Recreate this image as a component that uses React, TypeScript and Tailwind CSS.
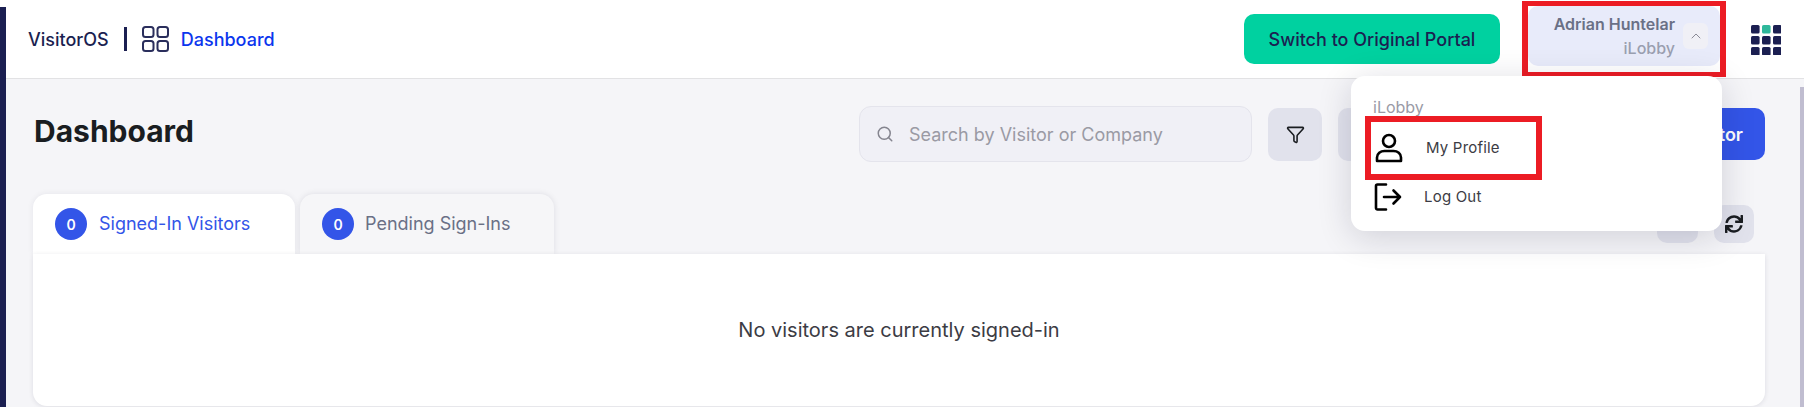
import React from "react";
import { Funnel, Search, ChevronUp } from "lucide-react";
import { FaSync } from "react-icons/fa";

function FourSquares() {
  return (
    <svg width="27" height="26" viewBox="0 0 27 26" fill="none" stroke="#2a2e5c" strokeWidth="2">
      <rect x="1" y="1" width="10.5" height="10" rx="2.5" />
      <rect x="15.5" y="1" width="10.5" height="10" rx="2.5" />
      <rect x="1" y="15" width="10.5" height="10" rx="2.5" />
      <rect x="15.5" y="15" width="10.5" height="10" rx="2.5" />
    </svg>
  );
}

function AppGrid() {
  const cells = [0, 1, 2, 3, 4, 5, 6, 7, 8];
  return (
    <svg width="30" height="30" viewBox="0 0 30 30">
      {cells.map((c) => (
        <rect
          key={c}
          x={(c % 3) * 11}
          y={Math.floor(c / 3) * 11 - 0}
          width="8.6"
          height="8.6"
          rx="1.6"
          fill={c === 1 ? "#2fb89b" : "#1b1f51"}
        />
      ))}
    </svg>
  );
}

function UserIcon() {
  return (
    <svg width="28" height="30" viewBox="0 0 28 30" fill="none" stroke="#000" strokeWidth="2.6">
      <circle cx="14" cy="8" r="6" />
      <path d="M2 24.5C2 20.5 5.5 18 9.5 18h9c4 0 7.5 2.5 7.5 6.5V28H2z" strokeLinejoin="round" />
    </svg>
  );
}

function LogoutIcon() {
  return (
    <svg width="28" height="28" viewBox="0 0 28 28" fill="none" stroke="#000" strokeWidth="2.6" strokeLinecap="round" strokeLinejoin="round">
      <path d="M12 1.5H3.5A1.5 1.5 0 0 0 2 3v22a1.5 1.5 0 0 0 1.5 1.5H12" />
      <path d="M10 14h16M19.5 7.5 26 14l-6.500 6.500" />
    </svg>
  );
}

export default function App() {
  return (
    <div className="flex h-[407px] w-[1804px] overflow-hidden bg-white font-['Inter',sans-serif]">
      <div className="mt-[7px] w-[6px] shrink-0 bg-[#1b1f51]" />
      <div className="flex min-w-0 flex-1 flex-col">
        <header className="relative z-10 flex h-[79px] shrink-0 items-center border-b border-[#e2e2e4] bg-white pl-[22px] pr-[23px]">
          <span className="text-[18px] font-medium text-[#1b1f51]">VisitorOS</span>
          <span className="ml-[15px] h-[24px] w-[3px] bg-[#1b1f51]" />
          <span className="ml-[15px] flex">
            <FourSquares />
          </span>
          <span className="ml-[12px] text-[18px] font-medium text-[#0b36ee]">Dashboard</span>
          <div className="ml-auto flex items-center">
            <button className="flex h-[50px] w-[256px] items-center justify-center rounded-[10px] bg-[#00d1a0] text-[18px] font-medium text-[#1b1f51]">
              Switch to Original Portal
            </button>
            <div className="relative ml-[22px] h-[76px] w-[204px]">
              <div className="h-full w-full border-x-[6px] border-y-[5px] border-[#ec1c24] bg-white">
                <div className="flex h-[60px] w-full items-center justify-end rounded-[10px] bg-[#e8ebfa] pr-[12px] pl-[10px]">
                  <div className="flex flex-col items-end text-[16px] leading-[24px] font-medium">
                    <span className="font-semibold text-[#6a7086]">Adrian Huntelar</span>
                    <span className="text-[#9a9fb0]">iLobby</span>
                  </div>
                  <span className="ml-[8px] flex h-[26px] w-[25px] items-center justify-center rounded-[6px] bg-[#f0f0f6]">
                    <ChevronUp size={16} strokeWidth={1.5} className="text-[#8a8a96]" />
                  </span>
                </div>
              </div>
              <div className="absolute left-[-171px] top-[75px] flex h-[155px] w-[371px] flex-col rounded-[14px] bg-white pl-[14px] pt-[21px] shadow-[0_6px_34px_rgba(20,20,50,0.16)]">
                <span className="ml-[8px] h-[20px] text-[16px] leading-[20px] text-[#9a9aa6]">iLobby</span>
                <div className="flex h-[64px] w-[177px] items-center border-[6px] border-[#ec1c24] bg-white pl-[4px] -mt-[1px]">
                  <UserIcon />
                  <span className="ml-[23px] text-[15px] tracking-[0.2px] text-[#3c3c44]">My Profile</span>
                </div>
                <div className="mt-[3px] flex items-center pl-[9px]">
                  <LogoutIcon />
                  <span className="ml-[22px] text-[15px] tracking-[0.2px] text-[#3c3c44]">Log Out</span>
                </div>
              </div>
            </div>
            <span className="ml-[25px] flex h-[30px] pt-[1px]">
              <AppGrid />
            </span>
          </div>
        </header>
        <div className="flex min-h-0 flex-1 bg-[#f5f5f8]">
          <main className="min-w-0 flex-1 pl-[27px] pr-[35px] pt-[27px]">
            <div className="flex h-[56px] items-start justify-between">
              <h1 className="pt-[5px] pl-[1px] text-[30px] leading-[40px] font-bold text-[#1a1d21]">Dashboard</h1>
              <div className="flex w-[906px] items-center">
                <div className="flex h-[56px] w-[393px] items-center rounded-[12px] border border-[#e4e4ec] bg-[#f0f0f6] pl-[16px]">
                  <Search size={18} strokeWidth={2} className="text-[#85858f]" />
                  <span className="ml-[15px] text-[18px] text-[#9a9aa4]">Search by Visitor or Company</span>
                </div>
                <button className="ml-[16px] flex h-[53px] w-[54px] items-center justify-center rounded-[10px] bg-[#e1e2ec]">
                  <Funnel size={19} strokeWidth={2} className="text-[#1a1d21]" />
                </button>
                <button className="ml-[16px] h-[53px] w-[54px] rounded-[10px] bg-[#e1e2ec]" />
                <button className="ml-auto flex h-[52px] w-[240px] items-center justify-end rounded-[10px] bg-[#3355e8] pr-[22px] text-[18px] font-semibold text-white">
                  Sign-In Visitor
                </button>
              </div>
            </div>
            <div className="mt-[32px] flex h-[60px] justify-between">
              <div className="flex gap-[5px]">
                <div className="flex w-[262px] items-start rounded-t-[14px] bg-white pl-[22px] pt-[14px] shadow-[0_0_6px_rgba(20,20,50,0.07)]">
                  <span className="flex h-[32px] w-[32px] items-center justify-center rounded-full bg-[#3355e8] text-[14px] font-semibold text-white">0</span>
                  <span className="ml-[12px] text-[18px] leading-[32px] text-[#3355e8]">Signed-In Visitors</span>
                </div>
                <div className="flex w-[254px] items-start rounded-t-[14px] bg-[#f6f6f8] pl-[22px] pt-[14px] shadow-[0_0_6px_rgba(20,20,50,0.1)]">
                  <span className="flex h-[32px] w-[32px] items-center justify-center rounded-full bg-[#3355e8] text-[14px] font-semibold text-white">0</span>
                  <span className="ml-[11px] text-[18px] leading-[32px] text-[#6a7086]">Pending Sign-Ins</span>
                </div>
              </div>
              <div className="flex gap-[16px] pr-[11px] pt-[11px]">
                <button className="h-[38px] w-[41px] rounded-[10px] bg-[#e1e2ec]" />
                <button className="flex h-[38px] w-[40px] items-center justify-center rounded-[10px] bg-[#e1e2ec]">
                  <FaSync size={18} className="text-[#1a1d21]" />
                </button>
              </div>
            </div>
            <div className="relative flex h-[152px] items-center justify-center rounded-b-[14px] bg-white shadow-[0_1px_5px_rgba(20,20,50,0.1)]">
              <span className="text-[20px] text-[#3c3c44]">No visitors are currently signed-in</span>
            </div>
          </main>
          <div className="mt-[8px] w-[4px] shrink-0 bg-[#c0bdd0]" />
        </div>
      </div>
    </div>
  );
}
